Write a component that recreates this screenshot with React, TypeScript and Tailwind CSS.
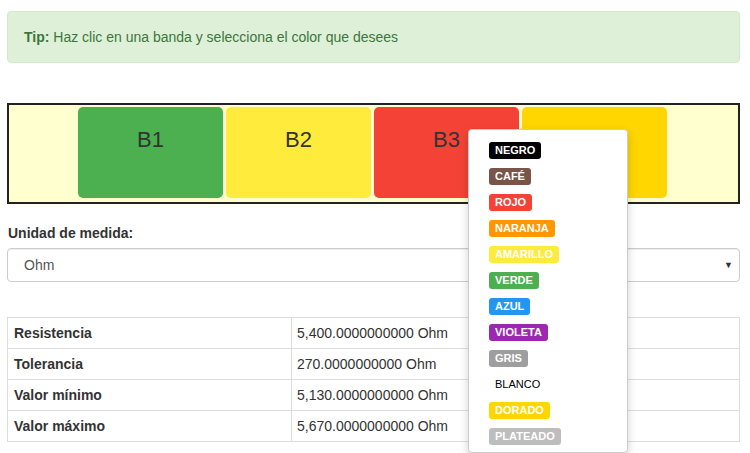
import React from "react";

const bands = [
  { name: "B1", bg: "bg-[#4caf50]" },
  { name: "B2", bg: "bg-[#ffeb3b]" },
  { name: "B3", bg: "bg-[#f44336]" },
  { name: "B4", bg: "bg-[#ffd600]" },
];

const colors = [
  { text: "NEGRO", cls: "bg-black text-white" },
  { text: "CAFÉ", cls: "bg-[#795548] text-white" },
  { text: "ROJO", cls: "bg-[#f44336] text-white" },
  { text: "NARANJA", cls: "bg-[#ff9800] text-white" },
  { text: "AMARILLO", cls: "bg-[#ffeb3b] text-white" },
  { text: "VERDE", cls: "bg-[#4caf50] text-white" },
  { text: "AZUL", cls: "bg-[#2196f3] text-white" },
  { text: "VIOLETA", cls: "bg-[#9c27b0] text-white" },
  { text: "GRIS", cls: "bg-[#9e9e9e] text-white" },
  { text: "BLANCO", cls: "bg-white text-black font-normal" },
  { text: "DORADO", cls: "bg-[#ffd600] text-white" },
  { text: "PLATEADO", cls: "bg-[#bdbdbd] text-white" },
];

const rows = [
  ["Resistencia", "5,400.0000000000 Ohm"],
  ["Tolerancia", "270.0000000000 Ohm"],
  ["Valor mínimo", "5,130.0000000000 Ohm"],
  ["Valor máximo", "5,670.0000000000 Ohm"],
];

const App: React.FC = () => {
  return (
    <div className="relative w-[750px] h-[453px] overflow-hidden bg-white text-[14px] leading-5 text-[#333] font-['Liberation_Sans',Arial,sans-serif]">
      <div className="px-[7px] pt-[11px]">
        {/* tip */}
        <div className="w-[733px] h-[52px] px-4 py-[15px] rounded bg-[#dff0d8] border border-[#d6e9c6] text-[#3c763d]">
          <b>Tip:</b> Haz clic en una banda y selecciona el color que desees
        </div>

        {/* resistor */}
        <div className="mt-[40px] w-[733px] h-[101px] border-2 border-[#222] bg-[#ffffd0] flex gap-[3px] pt-[2px] pl-[69px]">
          {bands.map((b) => (
            <div
              key={b.name}
              className={`${b.bg} w-[145px] h-[91px] rounded-[5px] text-center text-[22px] leading-none pt-[22px] text-[#333] cursor-pointer`}
            >
              {b.name}
            </div>
          ))}
        </div>

        {/* unidad */}
        <div className="mt-[19px] pl-[1px] font-bold">Unidad de medida:</div>
        <div className="mt-[5px] w-[733px] h-[34px] border border-[#ccc] rounded flex items-center justify-between pl-4 pr-[6px] shadow-[inset_0_1px_1px_rgba(0,0,0,0.075)]">
          <span className="text-[#555]">Ohm</span>
          <span className="text-[9px] text-[#333]">▼</span>
        </div>

        {/* results */}
        <table className="mt-[35px] w-[733px] border-collapse border border-[#ddd]">
          <tbody>
            {rows.map(([k, v]) => (
              <tr key={k} className="h-[31px]">
                <td className="w-[284px] border border-[#ddd] px-[6px] font-bold">{k}</td>
                <td className="border border-[#ddd] px-[5px]">{v}</td>
              </tr>
            ))}
          </tbody>
        </table>
      </div>

      {/* color dropdown */}
      <div className="absolute left-[468px] top-[129px] w-[160px] h-[324px] bg-white border border-[#ccc] rounded shadow-[0_4px_10px_rgba(0,0,0,0.18)] pt-[7px] px-5">
        {colors.map((c) => (
          <div key={c.text} className="h-[26px] flex items-center">
            <span className={`${c.cls} inline-block text-[11px] font-bold leading-none px-[6px] pt-[3px] pb-[3px] rounded-[3px]`}>
              {c.text}
            </span>
          </div>
        ))}
      </div>
    </div>
  );
};

export default App;
